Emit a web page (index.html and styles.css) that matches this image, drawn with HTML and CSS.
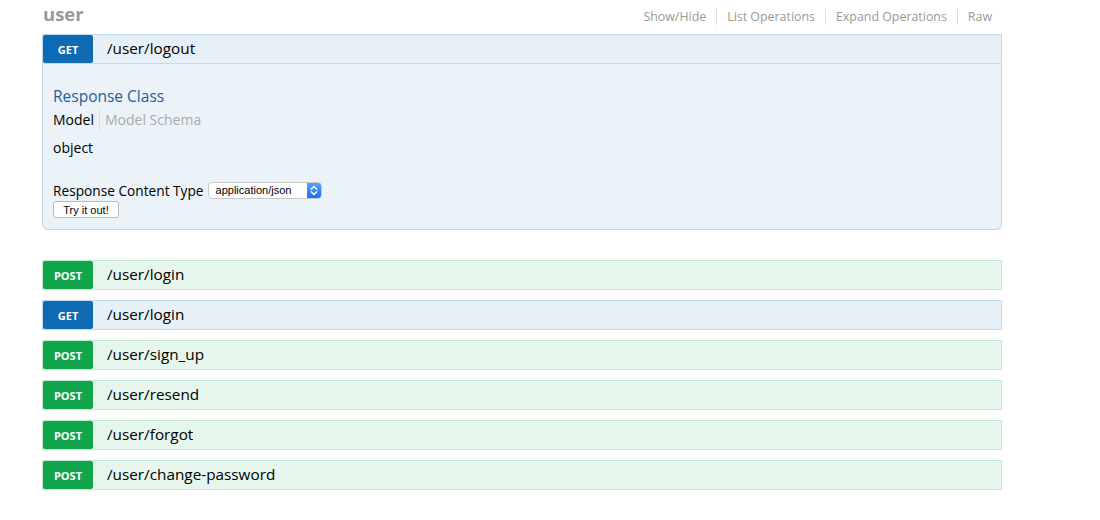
FILE: index.html
```html
<!DOCTYPE html>
<html>
<head>
<meta charset="utf-8">
<link rel="stylesheet" href="styles.css">
</head>
<body>
<div class="resource">
  <div class="heading">
    <h2 class="title">user</h2>
    <ul class="options">
      <li>Show/Hide</li>
      <li>List Operations</li>
      <li>Expand Operations</li>
      <li>Raw</li>
    </ul>
  </div>
  <ul class="ops">
    <li class="op get open">
      <div class="op-head">
        <span class="method">GET</span>
        <span class="path">/user/logout</span>
      </div>
      <div class="content">
        <h4 class="rc">Response Class</h4>
        <div class="tabs"><span class="tab active">Model</span><span class="tab">Model Schema</span></div>
        <div class="model">object</div>
        <div class="ctype">
          <span class="ctype-label">Response Content Type</span>
          <span class="select"><span class="select-text">application/json</span><span class="select-arrow"><svg width="8" height="11" viewBox="0 0 8 11"><path d="M1.2 4.2 L4 1.5 L6.8 4.2 M1.2 6.8 L4 9.5 L6.8 6.8" fill="none" stroke="#fff" stroke-width="1.4" stroke-linecap="round" stroke-linejoin="round"/></svg></span></span>
        </div>
        <button class="try">Try it out!</button>
      </div>
    </li>
    <li class="op post"><div class="op-head"><span class="method">POST</span><span class="path">/user/login</span></div></li>
    <li class="op get"><div class="op-head"><span class="method">GET</span><span class="path">/user/login</span></div></li>
    <li class="op post"><div class="op-head"><span class="method">POST</span><span class="path">/user/sign_up</span></div></li>
    <li class="op post"><div class="op-head"><span class="method">POST</span><span class="path">/user/resend</span></div></li>
    <li class="op post"><div class="op-head"><span class="method">POST</span><span class="path">/user/forgot</span></div></li>
    <li class="op post"><div class="op-head"><span class="method">POST</span><span class="path">/user/change-password</span></div></li>
  </ul>
</div>
</body>
</html>
```
FILE: styles.css
```css
html, body {
  margin: 0;
  padding: 0;
  background: #fff;
}
body {
  font-family: "Open Sans", "Noto Sans", sans-serif;
  color: #000;
}
.resource {
  width: 960px;
  margin-left: 42px;
}
.heading {
  display: flex;
  align-items: center;
  justify-content: space-between;
  height: 34px;
}
.title {
  margin: -6px 0 0 1px;
  font-size: 18.5px;
  font-weight: 700;
  color: #999;
  line-height: 24px;
}
.options {
  list-style: none;
  display: flex;
  margin: -1px 10px 0 0;
  padding: 0;
}
.options li {
  font-size: 12.4px;
  line-height: 16px;
  color: #999;
  padding: 0 10px;
  border-left: 1px solid #ddd;
}
.options li:first-child {
  border-left: none;
}
.options li:last-child {
  padding-right: 0;
}
.ops {
  list-style: none;
  margin: 0;
  padding: 0;
}
.op {
  margin-bottom: 10px;
}
.op.open {
  margin-bottom: 30px;
}
.op-head {
  display: flex;
  align-items: center;
  height: 28px;
  border: 1px solid;
}
.get .op-head {
  background: #e7f0f7;
  border-color: #c3d9ec;
}
.post .op-head {
  background: #e7f6ec;
  border-color: #c3e8d1;
}
.method {
  width: 50px;
  height: 28px;
  box-sizing: border-box;
  padding-top: 2px;
  line-height: 26px;
  text-align: center;
  color: #fff;
  font-size: 11px;
  font-weight: 700;
  border-radius: 2px;
}
.get .method {
  background: #0f6ab4;
}
.post .method {
  background: #10a54a;
}
.path {
  margin-left: 14px;
  padding-bottom: 2px;
  font-size: 15.3px;
  color: #000;
}
.content {
  background: #ebf3f9;
  border: 1px solid #c3d9ec;
  border-top: none;
  border-radius: 0 0 6px 6px;
  padding: 0 10px 11px;
  font-size: 14px;
}
.rc {
  margin: 0;
  padding-top: 22px;
  font-size: 15.5px;
  line-height: 20px;
  font-weight: 400;
  color: #1e5e98;
}
.tabs {
  margin-top: 4px;
  display: flex;
  line-height: 20px;
}
.tab {
  color: #aaa;
  font-size: 14px;
  padding-left: 5px;
  border-left: 1px solid #ddd;
}
.tab.active {
  color: #000;
  padding-left: 0;
  padding-right: 5px;
  border-left: none;
}
.model {
  margin-top: 8px;
  line-height: 20px;
}
.ctype {
  margin-top: 23px;
  display: flex;
  align-items: center;
  height: 19px;
}
.ctype-label {
  font-size: 13.7px;
  margin-right: 4px;
}
.select {
  display: flex;
  align-items: stretch;
  width: 114px;
  height: 17px;
  box-sizing: border-box;
  border: 1px solid #c8c8c8;
  border-radius: 4px;
  background: #fff;
  overflow: hidden;
  font-family: "Liberation Sans", Arial, sans-serif;
  font-size: 11px;
}
.select-text {
  flex: 1;
  padding-left: 7px;
  line-height: 15px;
}
.select-arrow {
  width: 14px;
  display: flex;
  align-items: center;
  justify-content: center;
  background: linear-gradient(#5aa2fb, #1b6fee);
}
.try {
  display: block;
  margin-top: 1px;
  width: 66px;
  height: 17px;
  padding: 0;
  background: #fff;
  border: 1px solid #bbb;
  border-radius: 3px;
  font-family: "Liberation Sans", Arial, sans-serif;
  font-size: 11px;
  color: #000;
}
```
